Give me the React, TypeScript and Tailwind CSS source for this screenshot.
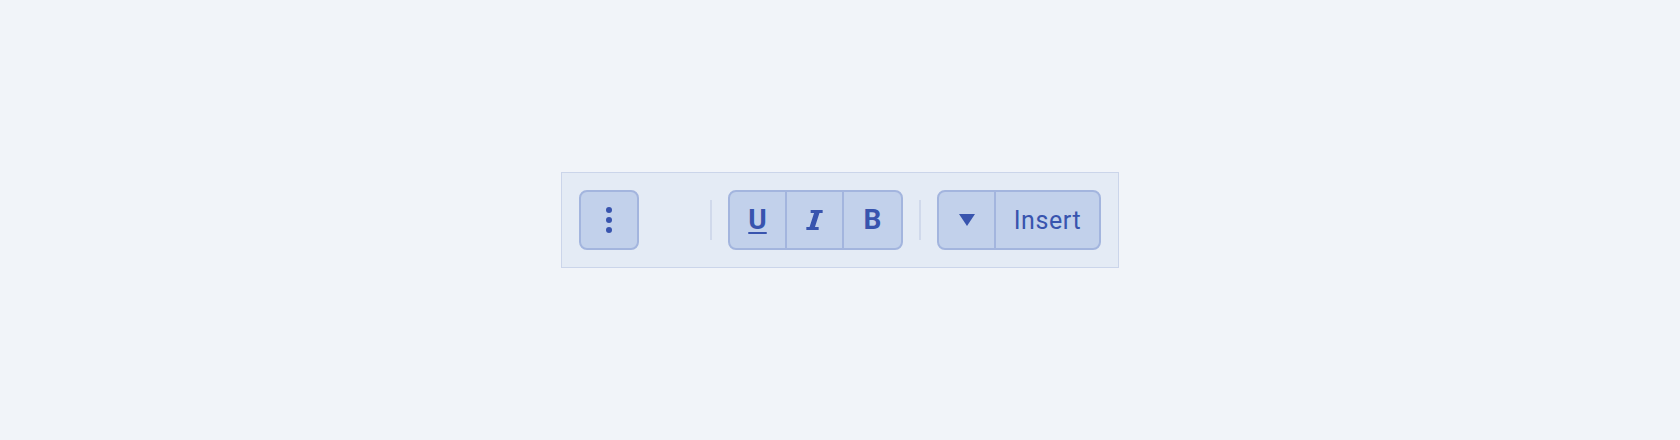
import { ReactNode } from 'react'

function Segment({ children, className = '' }: { children: ReactNode; className?: string }) {
  return (
    <button className={`flex h-full items-center justify-center text-[#3854ae] ${className}`}>
      {children}
    </button>
  )
}

function Divider() {
  return <div className="h-[40px] w-[2px] bg-[#d0d9eb]" />
}

export default function App() {
  return (
    <div className="flex h-[440px] w-full items-center justify-center bg-[#f1f4f9] font-['Roboto',sans-serif]">
      <div className="flex items-center border border-[#cbd5ea] bg-[#e4ebf5] p-[17px]">
        {/* more menu */}
        <button className="flex h-[60px] w-[60px] flex-col items-center justify-center gap-[4px] rounded-[8px] border-2 border-[#a3b5de] bg-[#c2d1eb]">
          <span className="h-[6px] w-[6px] rounded-full bg-[#3854ae]" />
          <span className="h-[6px] w-[6px] rounded-full bg-[#3854ae]" />
          <span className="h-[6px] w-[6px] rounded-full bg-[#3854ae]" />
        </button>

        <div className="ml-[71px] mr-[16px]">
          <Divider />
        </div>

        {/* formatting */}
        <div className="flex h-[60px] overflow-hidden rounded-[8px] border-2 border-[#a3b5de] bg-[#c2d1eb]">
          <Segment className="w-[57px] border-r-2 border-[#a3b5de]">
            <span className="text-[28px] font-bold leading-none underline decoration-2 underline-offset-[3px]">U</span>
          </Segment>
          <Segment className="w-[57px] border-r-2 border-[#a3b5de]">
            <svg width="17" height="20" viewBox="0 0 16.3 20" fill="currentColor">
              <path d="M4.3 0H16.3V3H13.1L8.6 17H12.3V20H0V17H3.2L7.7 3H4.3Z" />
            </svg>
          </Segment>
          <Segment className="w-[57px]">
            <span className="text-[28px] font-bold leading-none">B</span>
          </Segment>
        </div>

        <div className="mx-[16px]">
          <Divider />
        </div>

        {/* insert */}
        <div className="flex h-[60px] overflow-hidden rounded-[8px] border-2 border-[#a3b5de] bg-[#c2d1eb]">
          <Segment className="w-[57px] border-r-2 border-[#a3b5de]">
            <svg width="16" height="12" viewBox="0 0 16 12" fill="currentColor">
              <path d="M0 0h16L8 12z" />
            </svg>
          </Segment>
          <Segment className="w-[103px]">
            <span className="text-[25px] leading-none tracking-[0.6px]">Insert</span>
          </Segment>
        </div>
      </div>
    </div>
  )
}
